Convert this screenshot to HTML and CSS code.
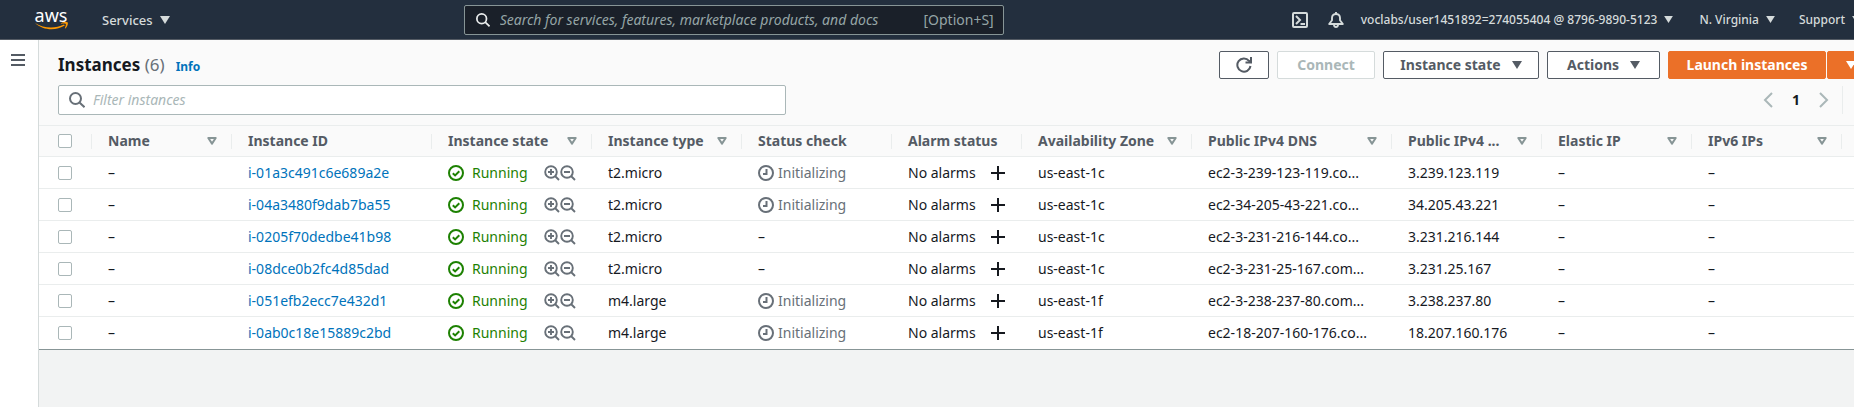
FILE: index.html
```html
<!DOCTYPE html>
<html lang="en">
<head>
<meta charset="utf-8">
<title>Instances</title>
<link rel="stylesheet" href="styles.css">
</head>
<body>
<svg class="defs" aria-hidden="true">
  <symbol id="caret" viewBox="0 0 10 8"><path d="M0 0h10L5 8z" fill="currentColor"/></symbol>
  <symbol id="sort" viewBox="0 0 10 8"><path d="M1.3 1h7.4L5 6.6z" fill="none" stroke="currentColor" stroke-width="2" stroke-linejoin="round"/></symbol>
  <symbol id="search" viewBox="0 0 16 16"><g fill="none" stroke="currentColor" stroke-width="2"><circle cx="6.500" cy="6.500" r="5.500"/><path d="M10.500 10.500l5 4.700"/></g></symbol>
  <symbol id="ok" viewBox="0 0 16 16"><g fill="none" stroke="currentColor" stroke-width="2"><circle cx="8" cy="8" r="7"/><path d="M4.800 8.200l2.300 2.200 4.200-4.200"/></g></symbol>
  <symbol id="clock" viewBox="0 0 16 16"><g fill="none" stroke="currentColor" stroke-width="2"><circle cx="8" cy="8" r="7"/><path d="M8.500 4v5H5"/></g></symbol>
  <symbol id="zin" viewBox="0 0 16 16"><g fill="none" stroke="currentColor" stroke-width="1.900"><circle cx="7" cy="7" r="5.800"/><path d="M11 11l4 4M4 7h6M7 4v6"/></g></symbol>
  <symbol id="zout" viewBox="0 0 16 16"><g fill="none" stroke="currentColor" stroke-width="1.900"><circle cx="7" cy="7" r="5.800"/><path d="M11 11l4 4M4 7h6"/></g></symbol>
  <symbol id="plus" viewBox="0 0 14 14"><path d="M7 0v14M0 7h14" fill="none" stroke="currentColor" stroke-width="2"/></symbol>
</svg>

<header class="topbar">
  <a class="logo" href="#" aria-label="AWS home">
    <span class="logo-word">aws</span>
    <svg class="logo-smile" viewBox="0 0 33 8" aria-hidden="true"><path d="M0 1c9 5.500 20 6 29 1.500l.8 1.100C21 9 8 8.600 0 1z" fill="#f90"/><path d="M26 1.200c2.500-1.300 6.300-1.400 6.800-.6.400.9-.4 4-2.400 6l-.6-.3c.7-1.700 1.400-3.700 1-4.300-.5-.6-2.900-.4-4.600-.2z" fill="#f90"/></svg>
  </a>
  <button class="nav-item services" type="button">Services <svg class="caret"><use href="#caret"/></svg></button>
  <label class="global-search">
    <svg class="icon-14"><use href="#search"/></svg>
    <input type="search" aria-label="Search" placeholder="Search for services, features, marketplace products, and docs">
    <span>[Option+S]</span>
  </label>
  <nav class="account">
    <button class="nav-item" type="button" aria-label="CloudShell"><svg class="icon-16" viewBox="0 0 16 16"><g fill="none" stroke="currentColor" stroke-width="2"><rect x="1" y="1" width="14" height="14" rx="1"/><path d="M4 4l4 4-4 4M8.500 12h4.500"/></g></svg></button>
    <button class="nav-item bell" type="button" aria-label="Notifications"><svg class="icon-16" viewBox="0 0 16 16"><g fill="none" stroke="currentColor" stroke-width="1.900" stroke-linejoin="round"><path d="M8 0v2M1.200 12L4 8.200V6c0-2.500 1.800-4 4-4s4 1.500 4 4v2.200l2.800 3.800zM6 12.500c0 3.300 4 3.300 4 0"/></g></svg></button>
    <button class="nav-item user" type="button">voclabs/user1451892=274055404 @ 8796-9890-5123 <svg class="caret small"><use href="#caret"/></svg></button>
    <button class="nav-item region" type="button">N. Virginia <svg class="caret small"><use href="#caret"/></svg></button>
    <button class="nav-item" type="button">Support <svg class="caret small"><use href="#caret"/></svg></button>
  </nav>
</header>

<div class="shell">
  <aside class="rail">
    <button type="button" aria-label="Open navigation"><svg class="menu" viewBox="0 0 14 12"><path d="M0 1h14M0 6h14M0 11h14" stroke="currentColor" stroke-width="2"/></svg></button>
  </aside>
  <main>
    <section class="panel">
      <div class="panel-head">
        <div class="title-row">
          <h1>Instances <span>(6)</span></h1>
          <a class="info" href="#">Info</a>
          <div class="actions">
            <button class="btn refresh" type="button" aria-label="Refresh"><svg class="icon-16" viewBox="0 0 16 16"><g fill="none" stroke="currentColor" stroke-width="2"><path d="M14.500 9A6.600 6.600 0 1 1 13 3.800L14.200 5"/><path d="M15 0v5.500H9.500"/></g></svg></button>
            <button class="btn connect" type="button" disabled>Connect</button>
            <button class="btn state" type="button">Instance state <svg class="caret"><use href="#caret"/></svg></button>
            <button class="btn menu-btn" type="button">Actions <svg class="caret"><use href="#caret"/></svg></button>
            <div class="split">
              <button class="btn primary" type="button">Launch instances</button>
              <button class="btn primary more" type="button" aria-label="More launch options"><svg class="caret"><use href="#caret"/></svg></button>
            </div>
          </div>
        </div>
        <div class="filter-row">
          <label class="filter">
            <svg class="icon-16"><use href="#search"/></svg>
            <input type="search" aria-label="Filter instances" placeholder="Filter instances">
          </label>
          <nav class="pages" aria-label="Pages">
            <button type="button" aria-label="Previous page"><svg class="chev" viewBox="0 0 10 16"><path d="M9 1L2 8l7 7" fill="none" stroke="currentColor" stroke-width="2"/></svg></button>
            <button class="current" type="button">1</button>
            <button type="button" aria-label="Next page"><svg class="chev" viewBox="0 0 10 16"><path d="M1 1l7 7-7 7" fill="none" stroke="currentColor" stroke-width="2"/></svg></button>
          </nav>
        </div>
      </div>
      <table>
        <colgroup><col class="w-check"><col class="w-140"><col class="w-200"><col class="w-160"><col class="w-150"><col class="w-150"><col class="w-130"><col class="w-170"><col class="w-200"><col class="w-150"><col class="w-150"><col class="w-150"><col></colgroup>
        <thead>
          <tr>
            <th class="check"><input type="checkbox" aria-label="Select all"></th>
            <th><div class="head">Name <svg class="sort"><use href="#sort"/></svg></div></th>
            <th><div class="head">Instance ID</div></th>
            <th><div class="head">Instance state <svg class="sort"><use href="#sort"/></svg></div></th>
            <th><div class="head">Instance type <svg class="sort"><use href="#sort"/></svg></div></th>
            <th><div class="head">Status check</div></th>
            <th><div class="head">Alarm status</div></th>
            <th><div class="head">Availability Zone <svg class="sort"><use href="#sort"/></svg></div></th>
            <th><div class="head">Public IPv4 DNS <svg class="sort"><use href="#sort"/></svg></div></th>
            <th><div class="head">Public IPv4 ... <svg class="sort"><use href="#sort"/></svg></div></th>
            <th><div class="head">Elastic IP <svg class="sort"><use href="#sort"/></svg></div></th>
            <th><div class="head">IPv6 IPs <svg class="sort"><use href="#sort"/></svg></div></th>
            <th><div class="head"></div></th>
          </tr>
        </thead>
        <tbody>
          <tr>
            <td class="check"><input type="checkbox" aria-label="Select i-01a3c491c6e689a2e"></td><td>–</td><td><a href="#">i-01a3c491c6e689a2e</a></td>
            <td><div class="run"><svg class="icon-16"><use href="#ok"/></svg><span>Running</span><svg class="icon-16"><use href="#zin"/></svg><svg class="icon-16"><use href="#zout"/></svg></div></td>
            <td>t2.micro</td><td><div class="init"><svg class="icon-16"><use href="#clock"/></svg>Initializing</div></td>
            <td><div class="alarm">No alarms<svg class="icon-14"><use href="#plus"/></svg></div></td>
            <td>us-east-1c</td><td>ec2-3-239-123-119.co...</td><td>3.239.123.119</td><td>–</td><td>–</td><td></td>
          </tr>
          <tr>
            <td class="check"><input type="checkbox" aria-label="Select i-04a3480f9dab7ba55"></td><td>–</td><td><a href="#">i-04a3480f9dab7ba55</a></td>
            <td><div class="run"><svg class="icon-16"><use href="#ok"/></svg><span>Running</span><svg class="icon-16"><use href="#zin"/></svg><svg class="icon-16"><use href="#zout"/></svg></div></td>
            <td>t2.micro</td><td><div class="init"><svg class="icon-16"><use href="#clock"/></svg>Initializing</div></td>
            <td><div class="alarm">No alarms<svg class="icon-14"><use href="#plus"/></svg></div></td>
            <td>us-east-1c</td><td>ec2-34-205-43-221.co...</td><td>34.205.43.221</td><td>–</td><td>–</td><td></td>
          </tr>
          <tr>
            <td class="check"><input type="checkbox" aria-label="Select i-0205f70dedbe41b98"></td><td>–</td><td><a href="#">i-0205f70dedbe41b98</a></td>
            <td><div class="run"><svg class="icon-16"><use href="#ok"/></svg><span>Running</span><svg class="icon-16"><use href="#zin"/></svg><svg class="icon-16"><use href="#zout"/></svg></div></td>
            <td>t2.micro</td><td>–</td>
            <td><div class="alarm">No alarms<svg class="icon-14"><use href="#plus"/></svg></div></td>
            <td>us-east-1c</td><td>ec2-3-231-216-144.co...</td><td>3.231.216.144</td><td>–</td><td>–</td><td></td>
          </tr>
          <tr>
            <td class="check"><input type="checkbox" aria-label="Select i-08dce0b2fc4d85dad"></td><td>–</td><td><a href="#">i-08dce0b2fc4d85dad</a></td>
            <td><div class="run"><svg class="icon-16"><use href="#ok"/></svg><span>Running</span><svg class="icon-16"><use href="#zin"/></svg><svg class="icon-16"><use href="#zout"/></svg></div></td>
            <td>t2.micro</td><td>–</td>
            <td><div class="alarm">No alarms<svg class="icon-14"><use href="#plus"/></svg></div></td>
            <td>us-east-1c</td><td>ec2-3-231-25-167.com...</td><td>3.231.25.167</td><td>–</td><td>–</td><td></td>
          </tr>
          <tr>
            <td class="check"><input type="checkbox" aria-label="Select i-051efb2ecc7e432d1"></td><td>–</td><td><a href="#">i-051efb2ecc7e432d1</a></td>
            <td><div class="run"><svg class="icon-16"><use href="#ok"/></svg><span>Running</span><svg class="icon-16"><use href="#zin"/></svg><svg class="icon-16"><use href="#zout"/></svg></div></td>
            <td>m4.large</td><td><div class="init"><svg class="icon-16"><use href="#clock"/></svg>Initializing</div></td>
            <td><div class="alarm">No alarms<svg class="icon-14"><use href="#plus"/></svg></div></td>
            <td>us-east-1f</td><td>ec2-3-238-237-80.com...</td><td>3.238.237.80</td><td>–</td><td>–</td><td></td>
          </tr>
          <tr>
            <td class="check"><input type="checkbox" aria-label="Select i-0ab0c18e15889c2bd"></td><td>–</td><td><a href="#">i-0ab0c18e15889c2bd</a></td>
            <td><div class="run"><svg class="icon-16"><use href="#ok"/></svg><span>Running</span><svg class="icon-16"><use href="#zin"/></svg><svg class="icon-16"><use href="#zout"/></svg></div></td>
            <td>m4.large</td><td><div class="init"><svg class="icon-16"><use href="#clock"/></svg>Initializing</div></td>
            <td><div class="alarm">No alarms<svg class="icon-14"><use href="#plus"/></svg></div></td>
            <td>us-east-1f</td><td>ec2-18-207-160-176.co...</td><td>18.207.160.176</td><td>–</td><td>–</td><td></td>
          </tr>
        </tbody>
      </table>
    </section>
  </main>
</div>
</body>
</html>
```

FILE: styles.css
```css
* { box-sizing: border-box; }
body {
  margin: 0;
  min-height: 100vh;
  display: flex;
  flex-direction: column;
  overflow: hidden;
  background: #f2f3f3;
  color: #16191f;
  font: 14px/20px "Noto Sans", "Open Sans", sans-serif;
}
button, input { font: inherit; color: inherit; }
button { padding: 0; border: 0; background: none; white-space: nowrap; cursor: pointer; }
a { color: #0073bb; text-decoration: none; }
svg { display: block; flex: none; }
.defs { position: absolute; width: 0; height: 0; }
.icon-14 { width: 14px; height: 14px; }
.icon-16 { width: 16px; height: 16px; }
.caret { width: 10px; height: 8px; }
.caret.small { width: 9px; height: 7px; }

.topbar {
  display: flex;
  align-items: center;
  height: 40px;
  padding-left: 34px;
  background: #232f3e;
  border-bottom: 1px solid #545b64;
  color: #d5dbdb;
}
.logo { width: 34px; color: #fff; display: flex; flex-direction: column; align-items: center; }
.logo-word { font-size: 18px; line-height: 12px; height: 13px; font-weight: 400; }
.logo-smile { width: 33px; height: 8px; }
.nav-item { display: flex; align-items: center; gap: 7px; font-size: 12px; font-weight: 500; }
.nav-item.services { margin: 0 6px 0 34px; font-size: 13px; }
.global-search {
  display: flex;
  align-items: center;
  width: 540px;
  height: 30px;
  margin: 0 auto;
  padding: 0 9px 0 11px;
  gap: 10px;
  background: #1a2029;
  border: 1px solid #879596;
  border-radius: 2px;
  color: #95a5a6;
}
.global-search svg { color: #eaeded; }
.global-search input { flex: 1; min-width: 0; padding: 0; border: 0; outline: 0; background: none; }
.global-search input::placeholder { color: #95a5a6; font-style: italic; opacity: 1; }
.account { display: flex; align-items: center; margin-right: -7px; }
.account .bell { margin: 0 17px 0 20px; }
.account .region { margin: 0 24px 0 26px; }

.shell { flex: 1; display: flex; }
.rail { flex: none; width: 39px; background: #fff; border-right: 1px solid #d5dbdb; }
.rail button { display: block; margin: 14px 0 0 11px; color: #545b64; }
.menu { width: 14px; height: 12px; }
main { flex: 1; min-width: 0; overflow: hidden; }
.panel { background: #fff; border-bottom: 1px solid #879596; }
.panel-head { padding: 11px 0 10px 19px; background: #fafafa; border-bottom: 1px solid #eaeded; }
.title-row { display: flex; align-items: center; height: 28px; }
h1 { margin: 0; font-size: 17px; line-height: 28px; font-weight: 700; }
h1 span { color: #687078; font-weight: 400; }
.info { margin: 4px 0 0 11px; font-size: 12px; font-weight: 700; }
.actions { display: flex; gap: 8px; margin: 0 -20px 0 auto; }
.btn {
  display: flex;
  align-items: center;
  justify-content: center;
  gap: 11px;
  height: 28px;
  border: 1px solid #545b64;
  border-radius: 2px;
  background: #fff;
  color: #545b64;
  font-weight: 700;
}
.refresh { width: 50px; }
.connect { width: 98px; border-color: #d5dbdb; color: #aab7b8; }
.state { width: 156px; }
.menu-btn { width: 113px; }
.split { display: flex; gap: 1px; }
.primary { width: 158px; border-color: #eb7028; background: #eb7028; color: #fff; }
.more { width: 47px; }
.filter-row { display: flex; align-items: center; justify-content: space-between; margin-top: 6px; }
.filter {
  display: flex;
  align-items: center;
  gap: 8px;
  width: 728px;
  height: 30px;
  padding: 0 10px;
  background: #fff;
  border: 1px solid #aab7b8;
  border-radius: 2px;
  color: #687078;
}
.filter input { flex: 1; min-width: 0; padding: 0; border: 0; outline: 0; background: none; }
.filter input::placeholder { color: #aab7b8; font-style: italic; opacity: 1; }
.pages { display: flex; align-items: center; gap: 19px; height: 28px; margin-right: 11px; padding-right: 13px; border-right: 1px solid #eaeded; color: #aab7b8; }
.pages .current { color: #16191f; font-weight: 700; }
.chev { width: 10px; height: 16px; }

table { width: 100%; table-layout: fixed; border-collapse: separate; border-spacing: 0; }
.w-check { width: 52px; }
.w-130 { width: 130px; }
.w-140 { width: 140px; }
.w-150 { width: 150px; }
.w-160 { width: 160px; }
.w-170 { width: 170px; }
.w-200 { width: 200px; }
th { height: 31px; padding: 0; background: #fafafa; border-bottom: 1px solid #eaeded; color: #545b64; text-align: left; }
td { height: 32px; padding: 0 0 0 17px; border-bottom: 1px solid #eaeded; white-space: nowrap; }
tbody tr:last-child td { border-bottom: 0; }
th.check, td.check { padding-left: 19px; }
.head { display: flex; align-items: center; justify-content: space-between; height: 15px; padding: 0 14px 0 16px; border-left: 1px solid #eaeded; white-space: nowrap; }
.sort { width: 10px; height: 8px; color: #879596; }
input[type="checkbox"] { display: block; appearance: none; width: 14px; height: 14px; margin: 0; background: #fff; border: 1px solid #aab7b8; border-radius: 2px; }
.run, .init, .alarm { display: flex; align-items: center; }
.run { color: #687078; }
.run .icon-16:first-child, .run span { color: #1d8102; }
.run span { width: 72px; margin-left: 8px; }
.init { gap: 4px; color: #687078; }
.alarm { justify-content: space-between; padding-right: 16px; }
```
